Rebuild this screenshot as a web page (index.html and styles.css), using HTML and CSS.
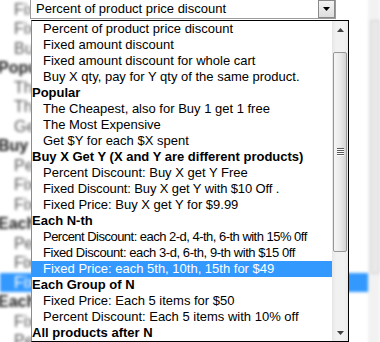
FILE: index.html
```html
<!DOCTYPE html>
<html>
<head>
<meta charset="utf-8">
<title>Discount type</title>
<link rel="stylesheet" href="styles.css">
</head>
<body>
<div class="screen">
  <div class="backdrop" aria-hidden="true">
    <div class="bd-list">
      <div class="bd-row">Percent of product price discount</div>
      <div class="bd-row">Fixed amount discount</div>
      <div class="bd-row">Fixed amount discount for whole cart</div>
      <div class="bd-row">Buy X qty, pay for Y qty of the same product.</div>
      <div class="bd-row bd-head">Popular</div>
      <div class="bd-row">The Cheapest, also for Buy 1 get 1 free</div>
      <div class="bd-row">The Most Expensive</div>
      <div class="bd-row">Get $Y for each $X spent</div>
      <div class="bd-row bd-head">Buy X Get Y (X and Y are different products)</div>
      <div class="bd-row">Percent Discount: Buy X get Y Free</div>
      <div class="bd-row">Fixed Discount: Buy X get Y with $10 Off .</div>
      <div class="bd-row">Fixed Price: Buy X get Y for $9.99</div>
      <div class="bd-row bd-head">Each N-th</div>
      <div class="bd-row bd-tight">Percent Discount: each 2-d, 4-th, 6-th with 15% 0ff</div>
      <div class="bd-row bd-tight">Fixed Discount: each 3-d, 6-th, 9-th with $15 0ff</div>
      <div class="bd-row bd-selected">Fixed Price: each 5th, 10th, 15th for $49</div>
      <div class="bd-row bd-head">Each Group of N</div>
      <div class="bd-row">Fixed Price: Each 5 items for $50</div>
      <div class="bd-row">Percent Discount: Each 5 items with 10% off</div>
      <div class="bd-row bd-head">All products after N</div>
    </div>
    <div class="bd-scroll"><div class="bd-thumb"></div></div>
  </div>

  <div class="combo">
    <div class="select">
      <span class="select-text">Percent of product price discount</span>
      <span class="select-btn">
        <svg width="7" height="4" viewBox="0 0 7 4"><polygon points="0,0 7,0 3.5,4" fill="#000"/></svg>
      </span>
    </div>
    <div class="list">
      <div class="options">
        <div class="opt">Percent of product price discount</div>
        <div class="opt">Fixed amount discount</div>
        <div class="opt">Fixed amount discount for whole cart</div>
        <div class="opt">Buy X qty, pay for Y qty of the same product.</div>
        <div class="group-label">Popular</div>
        <div class="opt">The Cheapest, also for Buy 1 get 1 free</div>
        <div class="opt">The Most Expensive</div>
        <div class="opt">Get $Y for each $X spent</div>
        <div class="group-label">Buy X Get Y (X and Y are different products)</div>
        <div class="opt">Percent Discount: Buy X get Y Free</div>
        <div class="opt tight-s">Fixed Discount: Buy X get Y with $10 Off .</div>
        <div class="opt">Fixed Price: Buy X get Y for $9.99</div>
        <div class="group-label">Each N-th</div>
        <div class="opt tight-l">Percent Discount: each 2-d, 4-th, 6-th with 15% 0ff</div>
        <div class="opt tight-m">Fixed Discount: each 3-d, 6-th, 9-th with $15 0ff</div>
        <div class="opt selected">Fixed Price: each 5th, 10th, 15th for $49</div>
        <div class="group-label">Each Group of N</div>
        <div class="opt">Fixed Price: Each 5 items for $50</div>
        <div class="opt">Percent Discount: Each 5 items with 10% off</div>
        <div class="group-label">All products after N</div>
      </div>
      <div class="scrollbar">
        <div class="sb-btn">
          <svg width="7" height="4" viewBox="0 0 7 4"><polygon points="0,4 3.5,0 7,4" fill="#404040"/></svg>
        </div>
        <div class="sb-track">
          <div class="thumb">
            <svg width="7" height="8" viewBox="0 0 7 8">
              <rect x="0" y="0" width="7" height="1" fill="#5a5a5a"/>
              <rect x="0" y="1" width="7" height="1" fill="#ffffff"/>
              <rect x="0" y="2" width="7" height="1" fill="#5a5a5a"/>
              <rect x="0" y="3" width="7" height="1" fill="#ffffff"/>
              <rect x="0" y="4" width="7" height="1" fill="#5a5a5a"/>
              <rect x="0" y="5" width="7" height="1" fill="#ffffff"/>
              <rect x="0" y="6" width="7" height="1" fill="#5a5a5a"/>
              <rect x="0" y="7" width="7" height="1" fill="#ffffff"/>
            </svg>
          </div>
        </div>
        <div class="sb-btn">
          <svg width="7" height="4" viewBox="0 0 7 4"><polygon points="0,0 7,0 3.5,4" fill="#404040"/></svg>
        </div>
      </div>
    </div>
  </div>
</div>
</body>
</html>
```

FILE: styles.css
```css
html, body {
  margin: 0;
  padding: 0;
  background: #ffffff;
}

.screen {
  position: relative;
  width: 380px;
  height: 342px;
  overflow: hidden;
  background: #ffffff;
  font-family: "Liberation Sans", Arial, sans-serif;
}

/* blurred page behind the open dropdown */
.backdrop {
  display: flex;
  margin-top: -20px;
  filter: blur(1.4px);
}

.bd-list {
  width: 368px;
  flex: none;
  font-size: 16px;
  line-height: 19.5px;
}

.bd-row {
  height: 19.5px;
  padding-left: 14px;
  color: #5a5a5a;
  white-space: nowrap;
  overflow: hidden;
}

.bd-tight {
  letter-spacing: -0.5px;
}

.bd-head {
  padding-left: 0;
  margin-left: -2px;
  font-weight: bold;
  color: #1a1a1a;
}

.bd-selected {
  background: #3399ff;
  color: #ffffff;
}

.bd-scroll {
  width: 12px;
  flex: none;
  padding-top: 40px;
  background: #f2f2f2;
}

.bd-thumb {
  height: 252px;
  margin-left: 2px;
  border: 1px solid #cfcfcf;
  border-radius: 2px;
  background: #e9e9e9;
}

/* the combo box and its open list */
.combo {
  position: absolute;
  left: 30px;
  top: -1px;
  width: 319px;
  font-size: 13px;
  color: #000000;
}

.select {
  box-sizing: border-box;
  width: 306px;
  height: 20px;
  border: 1px solid #9c9c9c;
  background: #ffffff;
  display: flex;
  align-items: stretch;
}

.select-text {
  flex: 1;
  padding-left: 5px;
  line-height: 18px;
  white-space: nowrap;
  overflow: hidden;
}

.select-btn {
  box-sizing: border-box;
  width: 17px;
  height: 18px;
  border: 1px solid #8a8a8a;
  background: linear-gradient(#f4f4f4, #dedede);
  display: flex;
  align-items: center;
  justify-content: center;
}

.list {
  box-sizing: border-box;
  width: 318px;
  height: 322px;
  margin-top: 1px;
  margin-left: 1px;
  border: 1px solid #000000;
  border-left-color: #8a8a8a;
  background: #ffffff;
  display: flex;
}

.options {
  width: 300px;
  flex: none;
  line-height: 16px;
}

.opt,
.group-label {
  height: 16px;
  white-space: nowrap;
  overflow: hidden;
}

.opt {
  padding-left: 11px;
}

.tight-s {
  letter-spacing: -0.12px;
}

.tight-m {
  letter-spacing: -0.43px;
}

.tight-l {
  letter-spacing: -0.52px;
}

.group-label {
  padding-left: 0;
  font-weight: bold;
}

.opt.selected {
  background: #3399ff;
  color: #ffffff;
}

.scrollbar {
  width: 16px;
  flex: none;
  display: flex;
  flex-direction: column;
  background: linear-gradient(to right, #e6e6e6, #f1f1f1 25%, #f1f1f1 75%, #e9e9e9);
}

.sb-btn {
  height: 17px;
  flex: none;
  display: flex;
  align-items: center;
  justify-content: center;
}

.sb-track {
  flex: 1;
  padding-top: 14px;
}

.thumb {
  box-sizing: border-box;
  width: 14px;
  height: 200px;
  margin-left: 1px;
  border: 1px solid #979797;
  border-radius: 2px;
  background: linear-gradient(to right, #f5f5f5, #e9e9e9 55%, #d4d4d4);
  display: flex;
  align-items: center;
  justify-content: center;
}
```
